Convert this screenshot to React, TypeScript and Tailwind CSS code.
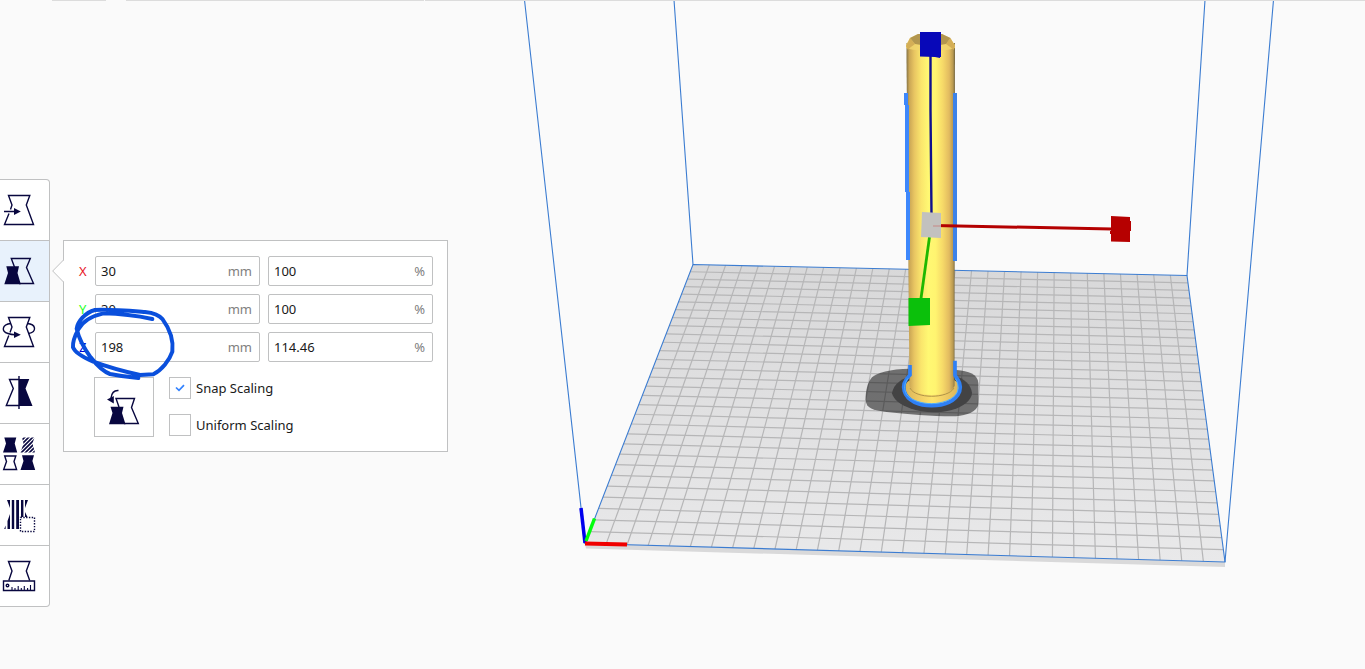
import { type ReactNode } from "react";

type Point = [number, number];

const CELLS = 30;
const BACK_LEFT: Point = [693, 264.5];
const BACK_RIGHT: Point = [1187, 275.5];
const FRONT_RIGHT: Point = [1225, 562];
const FRONT_LEFT: Point = [585, 543.5];

/** Projects plate coordinates (0..1 across, 0..1 back to front) to the viewport. */
function project(u: number, v: number): Point {
  const [x0, y0] = BACK_LEFT;
  const [x1, y1] = BACK_RIGHT;
  const [x2, y2] = FRONT_RIGHT;
  const [x3, y3] = FRONT_LEFT;
  const dx1 = x1 - x2;
  const dx2 = x3 - x2;
  const sx = x0 - x1 + x2 - x3;
  const dy1 = y1 - y2;
  const dy2 = y3 - y2;
  const sy = y0 - y1 + y2 - y3;
  const det = dx1 * dy2 - dx2 * dy1;
  const g = (sx * dy2 - dx2 * sy) / det;
  const h = (dx1 * sy - sx * dy1) / det;
  const w = g * u + h * v + 1;
  return [
    ((x1 - x0 + g * x1) * u + (x3 - x0 + h * x3) * v + x0) / w,
    ((y1 - y0 + g * y1) * u + (y3 - y0 + h * y3) * v + y0) / w,
  ];
}

function GridLines() {
  const lines: [Point, Point][] = [];
  for (let i = 1; i < CELLS; i++) {
    const t = i / CELLS;
    lines.push([project(t, 0), project(t, 1)]);
    lines.push([project(0, t), project(1, t)]);
  }
  return (
    <g stroke="#b6b6b7" strokeWidth="1.2">
      {lines.map(([a, b], i) => (
        <line key={i} x1={a[0]} y1={a[1]} x2={b[0]} y2={b[1]} />
      ))}
    </g>
  );
}

function Scene() {
  return (
    <svg
      className="absolute inset-0 h-full w-full"
      viewBox="0 0 1365 669"
      preserveAspectRatio="xMidYMid slice"
      role="img"
      aria-label="Build plate with a scaled column"
    >
      <defs>
        <linearGradient id="plate" x1="0" y1="0" x2="0" y2="1">
          <stop offset="0" stopColor="#d8d8d9" />
          <stop offset="1" stopColor="#e9e9ea" />
        </linearGradient>
        <linearGradient id="column" x1="0" y1="0" x2="1" y2="0">
          <stop offset="0" stopColor="#857344" />
          <stop offset="0.06" stopColor="#cba755" />
          <stop offset="0.16" stopColor="#e8c562" />
          <stop offset="0.3" stopColor="#fae56c" />
          <stop offset="0.45" stopColor="#fff873" />
          <stop offset="0.6" stopColor="#fff470" />
          <stop offset="0.75" stopColor="#f6d968" />
          <stop offset="0.88" stopColor="#e2bb60" />
          <stop offset="0.96" stopColor="#b79850" />
          <stop offset="1" stopColor="#6f6340" />
        </linearGradient>
        <linearGradient id="flange" x1="0" y1="0" x2="1" y2="0">
          <stop offset="0" stopColor="#d9b45a" />
          <stop offset="0.3" stopColor="#f3d066" />
          <stop offset="0.5" stopColor="#fde46c" />
          <stop offset="0.7" stopColor="#f3d066" />
          <stop offset="1" stopColor="#d9b45a" />
        </linearGradient>
      </defs>

      <path d="M585 543.5L1225 562V567L586 548.5Z" fill="#d9d9da" />
      <path d="M693 264.5L1187 275.5L1225 562L585 543.5Z" fill="url(#plate)" />
      <GridLines />
      <g fill="none" stroke="#3b7cd1" strokeWidth="1.1">
        <path d="M693 264.5L1187 275.5L1225 562L585 543.5Z" />
        <path d="M693 264.5L674 0M585 543.5L524.5 0M1187 275.5L1205 0M1225 562L1273.5 0" />
      </g>

      <path d="M581 508L585 543" stroke="#0000ee" strokeWidth="3.5" />
      <path d="M586 541L594.5 518.5" stroke="#00ff0d" strokeWidth="3.5" />
      <path d="M585 543.5L627 544.5" stroke="#f00000" strokeWidth="4" />

      <g transform="translate(850 240) scale(.33333)">
        <path
          d="M47 480C46 455 52 428 66 412C80 398 120 387 180 386L320 390C355 393 384 402 385 430V492C382 515 350 526 318 529C260 530 170 523 110 516C70 511 48 505 47 480Z"
          fill="#000"
          fillOpacity=".5"
        />
        <path
          d="M126 460C130 432 158 412 190 408H310C345 414 362 435 366 458C366 480 340 500 305 510C260 522 215 517 180 505C150 494 130 478 126 460Z"
          fill="#434344"
        />
        <path d="M166 440C168 420 190 412 246 412S326 420 327 440C329 472 300 492 246 492S165 472 166 440Z" fill="url(#flange)" />
      </g>

      <path d="M906.5 43V60L909.5 386C913 398 950 398 954.500 386L955 43Z" fill="url(#column)" />
      <path d="M910 388C915 399 948 399 954 388" fill="none" stroke="#b09447" strokeWidth="1" />
      <path d="M906 45L910 38L918 34H942L950 38L955 45V48Q948 51 931 51T906 48Z" fill="#f1d56d" fillOpacity=".85" />
      <path d="M906 46L910 38L915 44Q909 48 908 50ZM955 46L950.500 38L946 44Q952 48 953.500 50Z" fill="#d4ae56" />
      <path d="M910 38L918 34H942L950.500 38L946 44Q931 47 915 44Z" fill="#b2964f" />

      <g fill="#3c82e8">
        <path d="M904 93H908V105H904ZM905 105H909V192H905ZM906 192H910V260H906Z" fill="#3d87fb" />
        <path d="M953 93H957V261H953Z" />
      </g>
      <g transform="translate(850 240) scale(.33333)" fill="none">
        <path
          d="M180 375V405C162 422 158 440 163 454C172 484 208 497 245 497S318 484 329 454C335 436 327 422 315 406V362"
          stroke="#2f80f5"
          strokeWidth="11"
        />
        <path d="M174 415C162 430 161 448 170 464C184 482 218 491 245 491S312 480 322 456C326 440 324 428 316 416" stroke="#4fb0ff" strokeWidth="3" />
      </g>

      <path d="M930.5 55V110L931.5 215" fill="none" stroke="#10108e" strokeWidth="2.4" />
      <path d="M920 32H941V57H940V58L935 57L920 56.5Z" fill="#0808b8" />
      <path d="M934 225.5L1112 229" stroke="#b40000" strokeWidth="3" />
      <path d="M1111 216L1130 217V221H1131V231H1130V242L1111 241.5V234H1110V231H1111Z" fill="#b60000" />
      <path d="M929.5 237L920.5 302" stroke="#1fb800" strokeWidth="2.8" />
      <path d="M908.5 298H930V325L908.5 326Z" fill="#0bc00b" />
      <path d="M922 212L941 213V238L921 237Z" fill="#c2c1bf" />
      <path d="M933 226H941" stroke="#c4a4a2" strokeWidth="2" />
    </svg>
  );
}

function Icon({ children }: { children: ReactNode }) {
  return (
    <svg width="49" height="60" viewBox="0 0 49 60" fill="none" stroke="#08073f" strokeWidth="1.4" aria-hidden="true">
      {children}
    </svg>
  );
}

const tools: { name: string; icon: ReactNode }[] = [
  {
    name: "Move",
    icon: (
      <>
        <path d="M10.5 29.5L12 25L8.5 15.5H29.8L26.3 25L33.5 44.5H4.5L9 33.5" />
        <path d="M4 31.5H15" />
        <path d="M14 28L20.8 31.5L14 35Z" fill="#08073f" stroke="none" />
      </>
    ),
  },
  {
    name: "Scale",
    icon: (
      <>
        <path d="M14.5 26L11.3 17.5H30.3L26.5 26.5L33.5 42.5H19" />
        <path d="M6.3 25.3H19L17.5 32L20.8 43.2H4.3L8 32Z" fill="#08073f" stroke="none" />
      </>
    ),
  },
  {
    name: "Rotate",
    icon: (
      <>
        <path d="M10 30.5L12 25L8.5 15.5H29.8L26.3 25L33.5 44.5H4.5L8.8 33.5" />
        <path d="M11 21.5C1.5 22.5 1.2 29.5 8 31.5Q11 32.7 15 32.7M27 21.5C36.5 22 37 30 28.5 31.5" />
        <path d="M14 29.5L20.8 32.7L14 36Z" fill="#08073f" stroke="none" />
      </>
    ),
  },
  {
    name: "Mirror",
    icon: (
      <>
        <path d="M19 16.5H9.5L13.3 25.5L6.3 42.5H19M19 13V46" />
        <path d="M19 16H29.3L25.5 25.5L32.5 43H19Z" fill="#08073f" stroke="none" />
      </>
    ),
  },
  {
    name: "Per model settings",
    icon: (
      <>
        <clipPath id="hatched-vessel">
          <path d="M22 13.5H34.5L32.4 19.5L35 28.5H20.5L23.5 19.5Z" />
        </clipPath>
        <g stroke="none" fill="#08073f">
          <path d="M4.3 13.5H16.3L14.7 19.5L17.2 28.5H3L6 19.5Z" />
          <path d="M22 31.3H34L32.4 37L35.2 46H20.5L23.5 37Z" />
        </g>
        <path
          d="M14 24L29 9M14 28L33 9M14 32L37 9M17 33L40 10M21 33L40 14M25 33L40 18M29 33L40 22M33 33L40 26"
          strokeWidth="1.6"
          clipPath="url(#hatched-vessel)"
        />
        <path d="M4.7 32H15.8L14 37.5L16.6 45.5H3.7L6.5 37.5Z" />
      </>
    ),
  },
  {
    name: "Support blocker",
    icon: (
      <>
        <g stroke="none" fill="#08073f">
          <path d="M7 15H10V23ZM10 29V44H7.5V36ZM5.6 40.500V44H4.200Z" />
          <path d="M11.8 15H14.2V44H11.8ZM16.2 15H19V44H16.2ZM21 15H23.4V32H21Z" />
          <path d="M25 15H28L25 23ZM25 27L27.500 32H25Z" />
        </g>
        <path d="M20.5 32.5H34.5V46.5H20.5Z" strokeDasharray="1.4 1.4" />
      </>
    ),
  },
  {
    name: "Measure",
    icon: (
      <>
        <path d="M8.8 34.5L12 25L8.5 15.5H29.8L26.3 25L29.7 34.5" />
        <path d="M3.5 35H34.5V44.5H3.5Z" />
        <circle cx="7.5" cy="39.5" r="1.3" />
        <path d="M12 44V41M15 44V42M18.2 44V40M21.3 44V42M24.3 44V40M27.6 44V42M30.5 44V39" strokeWidth="1.1" />
      </>
    ),
  },
];

function Toolbar({ active }: { active: string }) {
  return (
    <nav
      aria-label="Tools"
      className="flex w-[50px] shrink-0 flex-col divide-y divide-[#c0c1c2] overflow-hidden rounded-r border border-l-0 border-[#c0c1c2] bg-white"
    >
      {tools.map((tool) => (
        <button
          key={tool.name}
          type="button"
          aria-label={tool.name}
          aria-pressed={tool.name === active}
          className="box-content h-[60px] hover:bg-[#e8f2fc] aria-pressed:bg-[#e8f2fc]"
        >
          <Icon>{tool.icon}</Icon>
        </button>
      ))}
    </nav>
  );
}

function Field({ id, value, unit, label }: { id: string; value: string; unit: string; label?: string }) {
  return (
    <div className="flex h-[30px] min-w-0 flex-1 items-center rounded-xs border border-[#c0c1c2] bg-white pr-[7px] pl-[5px]">
      <input id={id} aria-label={label} defaultValue={value} className="h-full w-full min-w-0 text-[#191919] outline-none" />
      <span className="text-[#808080]">{unit}</span>
    </div>
  );
}

function AxisRow({ axis, color, size, percent }: { axis: string; color: string; size: string; percent: string }) {
  return (
    <div className="flex items-center">
      <label htmlFor={`size-${axis}`} className={`w-4 ${color}`}>
        {axis}
      </label>
      <div className="flex min-w-0 flex-1 gap-2">
        <Field id={`size-${axis}`} value={size} unit="mm" />
        <Field id={`percent-${axis}`} value={percent} unit="%" label={`${axis} scale in percent`} />
      </div>
    </div>
  );
}

function CheckOption({ label, checked }: { label: string; checked?: boolean }) {
  return (
    <label className="flex items-center gap-[5px]">
      <span className="grid size-[22px] place-items-center">
        <input
          type="checkbox"
          defaultChecked={checked}
          className="peer col-start-1 row-start-1 size-[22px] appearance-none border border-[#c0c1c2] bg-white"
        />
        <svg
          width="10"
          height="8"
          viewBox="0 0 10 8"
          fill="none"
          stroke="#3282ff"
          strokeWidth="1.7"
          aria-hidden="true"
          className="pointer-events-none invisible col-start-1 row-start-1 peer-checked:visible"
        >
          <path d="M1 3.5L4 6.3L9 1.2" />
        </svg>
      </span>
      {label}
    </label>
  );
}

function ScalePanel() {
  return (
    <section
      aria-label="Scale"
      className="relative mt-[61px] ml-[13px] w-[385px] border border-[#c0c1c2] bg-white p-[14px] pt-[15px] pl-[15px]"
    >
      <svg width="13" height="24" viewBox="0 0 13 24" className="absolute top-[18px] -left-3" aria-hidden="true">
        <path d="M12 1L.7 12L12 23H13V1Z" fill="#fff" />
        <path d="M11.5 1L.7 12L11.5 23" fill="none" stroke="#c0c1c2" />
      </svg>

      <div className="flex flex-col gap-2">
        <AxisRow axis="X" color="text-[#e8141e]" size="30" percent="100" />
        <AxisRow axis="Y" color="text-[#1fff1f]" size="30" percent="100" />
        <AxisRow axis="Z" color="text-[#0000d8]" size="198" percent="114.46" />
      </div>

      <div className="mt-[15px] ml-[15px] flex gap-[15px]">
        <button
          type="button"
          aria-label="Reset scale"
          className="size-[60px] border border-[#c0c1c2] bg-white"
        >
          <svg width="58" height="58" viewBox="0 0 58 58" fill="none" stroke="#08073f" strokeWidth="1.4" aria-hidden="true">
            <path d="M24 29L21 20.5H39.5L36.5 29.5L43.3 45.5H29" />
            <path d="M15.5 28.8H28.5L27 35L30.5 46.2H14L17.5 35Z" fill="#08073f" stroke="none" />
            <path d="M23.5 12.5Q17 12 16 20" />
            <path d="M12 21.500L18.8 18V25.500Z" fill="#08073f" stroke="none" />
          </svg>
        </button>
        <div className="flex flex-col gap-[15px]">
          <CheckOption label="Snap Scaling" checked />
          <CheckOption label="Uniform Scaling" />
        </div>
      </div>

      <svg
        width="130"
        height="150"
        viewBox="0 0 390 450"
        className="pointer-events-none absolute top-[49px] -left-1"
        fill="none"
        stroke="#0a4fdc"
        strokeWidth="12"
        strokeLinecap="round"
        strokeLinejoin="round"
        aria-hidden="true"
      >
        <path d="M277 87C230 77 180 71 130 70C95 78 68 94 55 118C44 138 38 160 39 172C45 188 70 202 100 215C140 230 190 244 240 255L280 253C305 240 328 212 337 185C341 150 328 115 308 88C296 73 275 68 255 66C200 62 150 58 105 60C75 68 53 95 50 116C55 140 70 172 92 202C112 228 130 245 150 252C180 258 210 262 235 264" />
      </svg>
    </section>
  );
}

export default function App() {
  return (
    <main className="relative min-h-screen overflow-hidden bg-[#fafafa] font-['Noto_Sans',sans-serif] text-[13px] leading-5 text-[#191919]">
      <Scene />
      <div className="relative flex h-px pl-[52px]">
        <div className="w-[54px] bg-[#dcdcdc]" />
        <div className="ml-5 w-[298px] bg-[#dcdcdc]" />
        <div className="ml-px flex-1 bg-[#dcdcdc]" />
      </div>
      <div className="relative flex items-start pt-[178px]">
        <Toolbar active="Scale" />
        <ScalePanel />
      </div>
    </main>
  );
}
